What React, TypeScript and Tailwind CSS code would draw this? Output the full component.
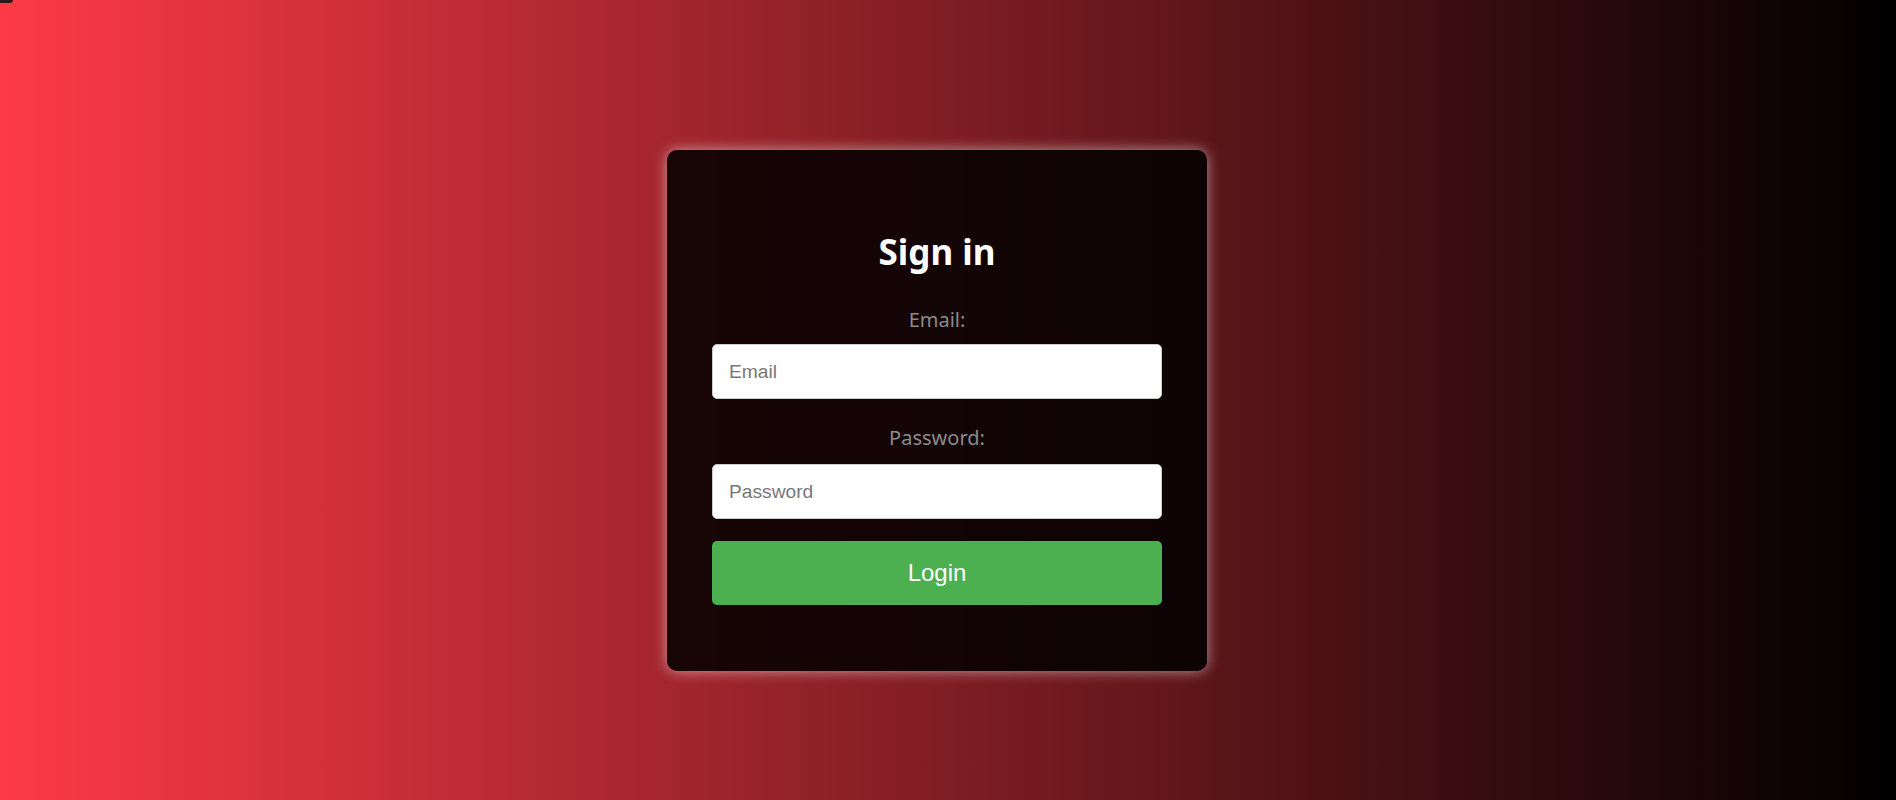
import React from 'react';

const LoginCard: React.FC = () => {
  return (
    <div className="w-[540px] rounded-[10px] bg-black/85 px-[45px] pt-[80px] pb-[66px] shadow-[0_0_14px_rgba(255,255,255,0.55)] flex flex-col">
      <h2 className="text-center text-[35px] leading-[43px] font-bold text-white font-['Noto_Sans',sans-serif]">
        Sign in
      </h2>

      <label className="mt-[34px] mb-[12px] text-center text-[20px] leading-[25px] text-[#8c8c8c] font-['Noto_Sans',sans-serif]">
        Email:
      </label>
      <input
        type="email"
        placeholder="Email"
        className="h-[55px] w-full rounded-[5px] border border-[#ccc] bg-white px-4 text-[19.2px] font-['Liberation_Sans',Arial,sans-serif] text-black placeholder:text-[#777] outline-none"
      />

      <label className="mt-[26px] mb-[14px] text-center text-[20px] leading-[25px] text-[#8c8c8c] font-['Noto_Sans',sans-serif]">
        Password:
      </label>
      <input
        type="password"
        placeholder="Password"
        className="h-[55px] w-full rounded-[5px] border border-[#ccc] bg-white px-4 text-[19.2px] font-['Liberation_Sans',Arial,sans-serif] text-black placeholder:text-[#777] outline-none"
      />

      <button className="mt-[22px] h-[64px] w-full rounded-[5px] bg-[#4caf50] text-[24px] text-white font-['Liberation_Sans',Arial,sans-serif]">
        Login
      </button>
    </div>
  );
};

export default function App() {
  return (
    <div className="relative min-h-screen w-full bg-[linear-gradient(to_right,#fd3a46,#000000)]">
      {/* little dark tab in the corner */}
      <div className="absolute left-0 top-0 h-[3px] w-[13px] rounded-br-[3px] bg-[#2a1a1a]" />
      <div className="flex justify-center pt-[150px] pr-[22px]">
        <LoginCard />
      </div>
    </div>
  );
}
